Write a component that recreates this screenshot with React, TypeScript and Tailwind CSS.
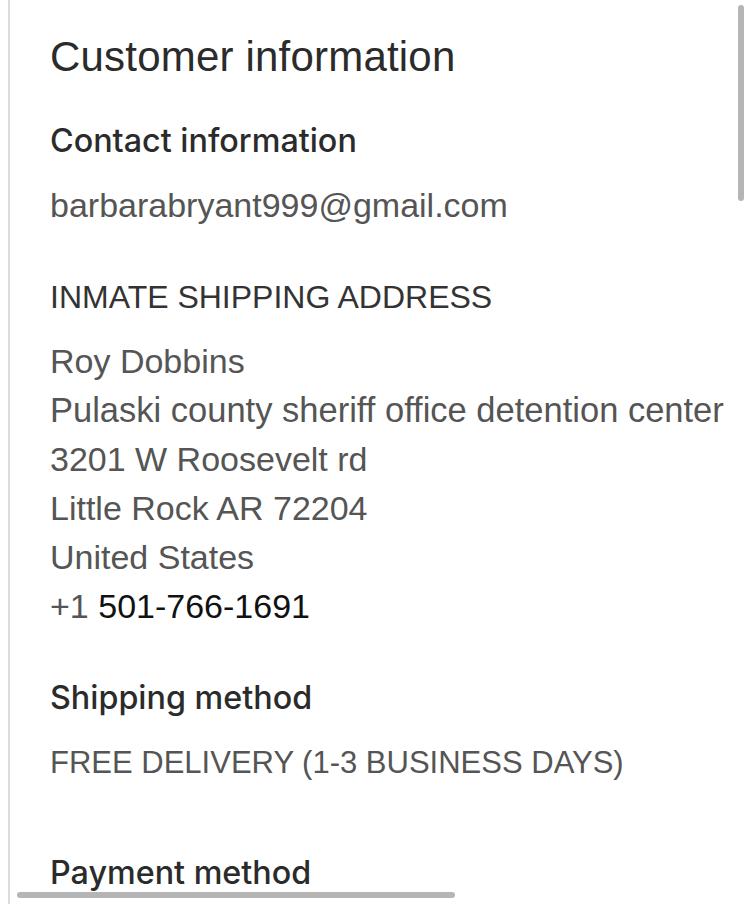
import React from 'react'

const sans = { fontFamily: '"Liberation Sans", Arial, sans-serif' }
const heading = { fontFamily: 'Inter, "Liberation Sans", sans-serif' }

const App = () => {
  const address = [
    'Roy Dobbins',
    'Pulaski county sheriff office detention center',
    '3201 W Roosevelt rd',
    'Little Rock AR 72204',
    'United States',
  ]

  return (
    <div className="relative w-[750px] h-[904px] bg-white overflow-hidden" style={sans}>
      <div className="ml-[8px] h-full border-l-2 border-[#dcdcdc] pl-[40px] pt-[33px]">
        <h1 className="text-[42px] leading-[48px] text-[#2b2b2b] tracking-[0.2px]">Customer information</h1>

        <h2 className="mt-[40px] text-[32.3px] leading-[40px] font-medium text-[#2b2b2b]" style={heading}>
          Contact information
        </h2>
        <p className="mt-[20px] text-[34px] leading-[49px] text-[#555]">barbarabryant999@gmail.com</p>

        <h3 className="mt-[47px] text-[32px] leading-[40px] text-[#333]">INMATE SHIPPING ADDRESS</h3>
        <div className="mt-[20px] text-[34px] leading-[49px] text-[#555]">
          {address.map((line) => (
            <p key={line} className={line.startsWith('Pulaski') ? 'text-[34.5px]' : ''}>
              {line}
            </p>
          ))}
          <p>
            +1 <span className="text-[#111]">501-766-1691</span>
          </p>
        </div>

        <h2 className="mt-[47px] text-[32.3px] leading-[40px] font-medium text-[#2b2b2b]" style={heading}>
          Shipping method
        </h2>
        <p className="mt-[20px] text-[31px] leading-[49px] text-[#555]">FREE DELIVERY (1-3 BUSINESS DAYS)</p>

        <h2 className="mt-[66px] text-[32.3px] leading-[40px] font-medium text-[#2b2b2b]" style={heading}>
          Payment method
        </h2>
      </div>

      {/* overlay scrollbars */}
      <div className="absolute right-[6px] top-[5px] w-[6px] h-[196px] rounded-full bg-[#b5b5b5]" />
      <div className="absolute left-[17px] top-[892px] w-[438px] h-[6px] rounded-full bg-[#b5b5b5]" />
    </div>
  )
}

export default App
